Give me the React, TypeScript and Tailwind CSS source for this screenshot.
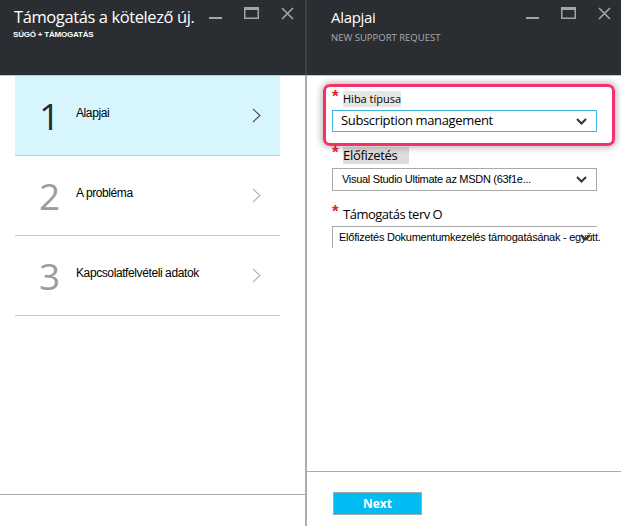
import React from "react";

const seg = { fontFamily: '"Open Sans", "Noto Sans", sans-serif' };
const ari = { fontFamily: '"Liberation Sans", Arial, sans-serif' };

function Controls() {
  const c = "#a3a5a8";
  return (
    <div className="flex items-start gap-[22px] pt-[7px] shrink-0">
      <svg width="13" height="14" viewBox="0 0 13 14" className="mt-[1px]">
        <rect x="0" y="9" width="13" height="2" fill={c} />
      </svg>
      <svg width="15" height="12" viewBox="0 0 15 12">
        <rect x="0.75" y="0.75" width="13.5" height="10.5" fill="none" stroke={c} strokeWidth="1.5" />
        <rect x="0" y="0" width="15" height="3" fill={c} />
      </svg>
      <svg width="13" height="13" viewBox="0 0 13 13">
        <path d="M1 1 L12 12 M12 1 L1 12" stroke={c} strokeWidth="1.6" />
      </svg>
    </div>
  );
}

function Chevron({ dark }: { dark?: boolean }) {
  return (
    <svg width="9" height="15" viewBox="0 0 9 15">
      <path d="M1 1 L8 7.5 L1 14" fill="none" stroke={dark ? "#4a4a4a" : "#b0b0b0"} strokeWidth="1.1" />
    </svg>
  );
}

function Down() {
  return (
    <svg width="11" height="7" viewBox="0 0 11 7">
      <path d="M1 1 L5.5 5.5 L10 1" fill="none" stroke="#333" strokeWidth="2" />
    </svg>
  );
}

function Star() {
  return (
    <span className="text-[#e3242b] text-[17px] leading-[14px] w-[11px] shrink-0 mt-[2px] font-bold" style={ari}>
      *
    </span>
  );
}

function Step({ n, label, active }: { n: string; label: string; active?: boolean }) {
  return (
    <div
      className={`h-[80px] border-b border-[#c8c8c8] flex items-center ${active ? "bg-[#d7f5fd]" : "bg-white"}`}
    >
      <div
        className={`w-[61px] pl-[24px] text-[37px] leading-none ${active ? "text-[#272b30]" : "text-[#9c9c9c]"}`}
        style={seg}
      >
        {n}
      </div>
      <div className="flex-1 text-[12px] text-black tracking-[-0.4px] -mt-[6px]" style={ari}>
        {label}
      </div>
      <div className="pr-[19px]">
        <Chevron dark={active} />
      </div>
    </div>
  );
}

export default function App() {
  return (
    <div className="w-[621px] h-[526px] flex bg-white overflow-hidden">
      {/* Left blade */}
      <div className="w-[305px] shrink-0 flex flex-col">
        <div className="h-[75px] bg-[#2a2e33] flex justify-between pl-[14px] pr-[11px] border-b border-[#c6c6c6] box-content">
          <div className="pt-[4px] min-w-0">
            <div className="text-[16.5px] leading-[26px] text-white tracking-[-0.4px] whitespace-nowrap" style={seg}>
              Támogatás a kötelező új.
            </div>
            <div className="text-[8px] leading-[10px] text-white font-bold tracking-[-0.2px] -ml-[1px] whitespace-nowrap" style={ari}>
              SÚGÓ + TÁMOGATÁS
            </div>
          </div>
          <Controls />
        </div>
        <div className="pl-[15px] pr-[25px]">
          <Step n="1" label="Alapjai" active />
          <Step n="2" label="A probléma" />
          <Step n="3" label="Kapcsolatfelvételi adatok" />
        </div>
        <div className="flex-1" />
        <div className="h-[32px] border-t border-[#acacac]" />
      </div>

      {/* divider */}
      <div className="w-[2px] shrink-0 flex flex-col">
        <div className="h-[75px] bg-[#3d4146]" />
        <div className="flex-1 bg-[#acacac]" />
      </div>

      {/* Right blade */}
      <div className="flex-1 min-w-0 flex flex-col relative">
        <div className="h-[75px] bg-[#2a2e33] flex justify-between pl-[24px] pr-[10px] border-b border-[#c6c6c6] box-content">
          <div className="pt-[5px]">
            <div className="text-[15px] leading-[24px] text-white tracking-[-0.3px]" style={seg}>
              Alapjai
            </div>
            <div className="text-[9.5px] leading-[12px] text-[#a9abad] mt-[3px]" style={seg}>
              NEW SUPPORT REQUEST
            </div>
          </div>
          <Controls />
        </div>

        <div className="flex-1 pl-[25px] pr-[24px] pt-[12px] relative">
          {/* field 1 */}
          <div className="flex items-start h-[22px]">
            <Star />
            <span className="bg-[#e6e6e6] text-[11px] leading-[16px] mt-[3px] text-black" style={seg}>
              Hiba típusa
            </span>
          </div>
          <div className="h-[22px] border border-[#3bb4e5] flex items-center justify-between pl-[8px] pr-[9px]">
            <span className="text-[13px] text-black tracking-[-0.35px]" style={seg}>
              Subscription management
            </span>
            <Down />
          </div>

          {/* field 2 */}
          <div className="flex items-start h-[24px] mt-[12px]">
            <Star />
            <span className="bg-[#dcdcdc] text-[13px] leading-[17px] pr-[11px] mt-[3px] text-black tracking-[-0.3px]" style={seg}>
              Előfizetés
            </span>
          </div>
          <div className="h-[23px] border border-[#a9a9a9] flex items-center justify-between pl-[9px] pr-[9px]">
            <span className="text-[11px] text-black tracking-[-0.3px]" style={ari}>
              Visual Studio Ultimate az MSDN (63f1e...
            </span>
            <Down />
          </div>

          {/* field 3 */}
          <div className="flex items-start h-[23px] mt-[12px]">
            <Star />
            <span className="text-[13px] leading-[17px] mt-[3px] text-black tracking-[-0.5px]" style={seg}>
              Támogatás terv O
            </span>
          </div>
          <div className="h-[22px] border-l border-t border-[#a9a9a9] flex items-center pl-[6px] relative whitespace-nowrap">
            <span className="text-[11px] text-black tracking-[-0.25px]" style={ari}>
              Előfizetés Dokumentumkezelés támogatásának - együtt.
            </span>
            <div className="absolute right-[6px] top-[7px]">
              <Down />
            </div>
          </div>

          {/* highlight annotation overlay */}
          <div className="absolute left-[16px] top-[8px] w-[292px] h-[62px] rounded-[7px] border-[3px] border-[#f5306b] shadow-[0_0_6px_2px_rgba(0,0,0,0.25)] pointer-events-none" />
        </div>

        <div className="h-[55px] border-t border-[#acacac] pl-[26px] pt-[20px]">
          <button
            className="w-[89px] h-[23px] bg-[#00bcf2] border border-[#a9a9a9] text-white text-[12px] font-bold flex items-center justify-center"
            style={seg}
          >
            Next
          </button>
        </div>
      </div>
    </div>
  );
}
